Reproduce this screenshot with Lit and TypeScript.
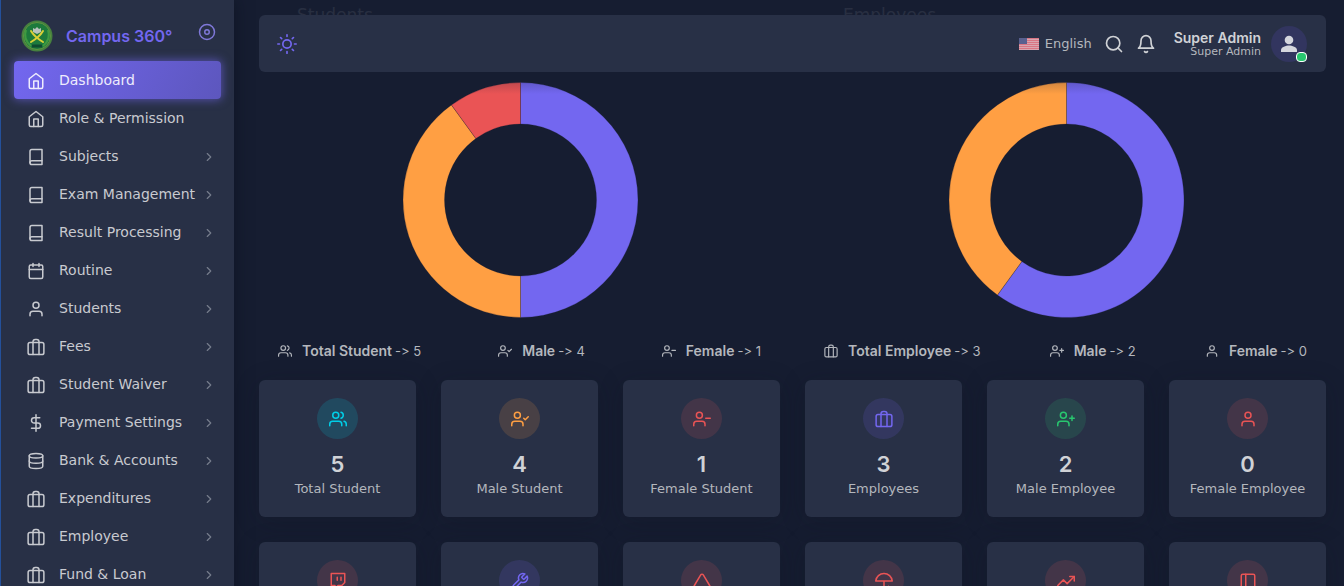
import { LitElement, html, css, svg, nothing } from "lit";
import { customElement, property } from "lit/decorators.js";
import { classMap } from "lit/directives/class-map.js";

const user = svg`<path d="M20 21v-2a4 4 0 0 0-4-4H8a4 4 0 0 0-4 4v2"/><circle cx="12" cy="7" r="4"/>`;
const userLeft = svg`<path d="M16 21v-2a4 4 0 0 0-4-4H5a4 4 0 0 0-4 4v2"/><circle cx="8.5" cy="7" r="4"/>`;

const ICONS: Record<string, unknown> = {
  home: svg`<path d="M3 9l9-7 9 7v11a2 2 0 0 1-2 2H5a2 2 0 0 1-2-2z"/><path d="M9 22V12h6v10"/>`,
  book: svg`<path d="M4 19.5A2.5 2.5 0 0 1 6.500 17H20"/><path d="M6.500 2H20v20H6.500A2.500 2.500 0 0 1 4 19.500v-15A2.500 2.500 0 0 1 6.500 2z"/>`,
  calendar: svg`<rect x="3" y="4" width="18" height="18" rx="2"/><path d="M16 2v4M8 2v4M3 10h18"/>`,
  user,
  users: svg`<path d="M17 21v-2a4 4 0 0 0-4-4H5a4 4 0 0 0-4 4v2"/><circle cx="9" cy="7" r="4"/><path d="M23 21v-2a4 4 0 0 0-3-3.870M16 3.130a4 4 0 0 1 0 7.750"/>`,
  userCheck: svg`${userLeft}<path d="M17 11l2 2 4-4"/>`,
  userMinus: svg`${userLeft}<path d="M23 11h-6"/>`,
  userPlus: svg`${userLeft}<path d="M20 8v6M23 11h-6"/>`,
  luggage: svg`<rect x="1.500" y="6" width="21" height="16" rx="2.500"/><path d="M8 22V5a3 3 0 0 1 3-3h2a3 3 0 0 1 3 3v17"/>`,
  dollar: svg`<path d="M12 1v22M17 5H9.500a3.500 3.500 0 0 0 0 7h5a3.500 3.500 0 0 1 0 7H6"/>`,
  database: svg`<ellipse cx="12" cy="5" rx="9" ry="3"/><path d="M21 12c0 1.660-4 3-9 3s-9-1.340-9-3"/><path d="M3 5v14c0 1.660 4 3 9 3s9-1.340 9-3V5"/>`,
  chevron: svg`<path d="M9 18l6-6-6-6"/>`,
  disc: svg`<circle cx="12" cy="12" r="10"/><circle cx="12" cy="12" r="3"/>`,
  sun: svg`<circle cx="12" cy="12" r="5"/><path d="M12 1v2M12 21v2M4.220 4.220l1.420 1.420M18.360 18.360l1.420 1.420M1 12h2M21 12h2M4.220 19.780l1.420-1.420M18.360 5.640l1.420-1.420"/>`,
  search: svg`<circle cx="11" cy="11" r="8"/><path d="M21 21l-4.350-4.350"/>`,
  bell: svg`<path d="M18 8A6 6 0 0 0 6 8c0 7-3 9-3 9h18s-3-2-3-9"/><path d="M13.730 21a2 2 0 0 1-3.460 0"/>`,
  twitch: svg`<path d="M21 2H3v16h5v4l4-4h5l4-4V2zM11 11V7M16 11V7"/>`,
  wrench: svg`<path d="M14.700 6.300a1 1 0 0 0 0 1.400l1.600 1.600a1 1 0 0 0 1.400 0l3.770-3.770a6 6 0 0 1-7.940 7.940l-6.910 6.910a2.120 2.120 0 0 1-3-3l6.910-6.910a6 6 0 0 1 7.940-7.940l-3.760 3.760z"/>`,
  triangle: svg`<path d="M10.290 3.860L1.820 18a2 2 0 0 0 1.710 3h16.940a2 2 0 0 0 1.710-3L13.710 3.860a2 2 0 0 0-3.420 0z"/>`,
  umbrella: svg`<path d="M23 12a11.050 11.050 0 0 0-22 0zm-5 7a3 3 0 0 1-6 0v-7"/>`,
  trending: svg`<path d="M23 6l-9.500 9.500-5-5L1 18"/><path d="M17 6h6v6"/>`,
  sidebar: svg`<rect x="3" y="3" width="18" height="18" rx="2"/><path d="M9 3v18"/>`,
};

@customElement("ui-icon")
export class UiIcon extends LitElement {
  @property() name = "";
  static styles = css`
    :host { display: inline-flex; flex: none; width: 18px; height: 18px; }
    svg { width: 100%; height: 100%; overflow: visible; fill: none; stroke: currentColor; stroke-width: 2; stroke-linecap: round; stroke-linejoin: round; }
  `;
  render() {
    return html`<svg viewBox="0 0 24 24" aria-hidden="true">${ICONS[this.name]}</svg>`;
  }
}

interface Slice { value: number; color: string; }

@customElement("donut-chart")
export class DonutChart extends LitElement {
  @property({ attribute: false }) slices: Slice[] = [];
  static styles = css`
    :host { display: block; }
    svg { display: block; width: 236px; height: 236px; }
    path { stroke: #161d31; stroke-opacity: 0.5; stroke-width: 0.5; }
  `;
  private sector(from: number, to: number) {
    const outer = 117.5;
    const inner = 76;
    const at = (r: number, t: number) => {
      const a = t * 2 * Math.PI;
      return `${(118.5 + r * Math.sin(a)).toFixed(2)} ${(118 - r * Math.cos(a)).toFixed(2)}`;
    };
    const large = to - from > 0.5 ? 1 : 0;
    return `M${at(outer, from)}A${outer} ${outer} 0 ${large} 1 ${at(outer, to)}L${at(inner, to)}A${inner} ${inner} 0 ${large} 0 ${at(inner, from)}Z`;
  }
  render() {
    const total = this.slices.reduce((sum, s) => sum + s.value, 0);
    let start = 0;
    return html`<svg viewBox="0 0 236 236" role="img">
      ${this.slices.map((s) => {
        const from = start;
        start += s.value / total;
        return svg`<path d=${this.sector(from, start)} fill=${s.color} />`;
      })}
    </svg>`;
  }
}

const PURPLE = "#7367f0";
const ORANGE = "#ff9f43";
const RED = "#ea5455";

const MENU: [string, string, boolean][] = [
  ["home", "Dashboard", false],
  ["home", "Role & Permission", false],
  ["book", "Subjects", true],
  ["book", "Exam Management", true],
  ["book", "Result Processing", true],
  ["calendar", "Routine", true],
  ["user", "Students", true],
  ["luggage", "Fees", true],
  ["luggage", "Student Waiver", true],
  ["dollar", "Payment Settings", true],
  ["database", "Bank & Accounts", true],
  ["luggage", "Expenditures", true],
  ["luggage", "Employee", true],
  ["luggage", "Fund & Loan", true],
];

const CHARTS = [
  {
    title: "Students",
    slices: [{ value: 5, color: PURPLE }, { value: 4, color: ORANGE }, { value: 1, color: RED }],
    legend: [["users", "Total Student", 5], ["userCheck", "Male", 4], ["userMinus", "Female", 1]],
  },
  {
    title: "Employees",
    slices: [{ value: 3, color: PURPLE }, { value: 2, color: ORANGE }],
    legend: [["luggage", "Total Employee", 3], ["userPlus", "Male", 2], ["user", "Female", 0]],
  },
];

const CARDS: { icon: string; tone: string; value?: number; label?: string }[] = [
  { icon: "users", tone: "info", value: 5, label: "Total Student" },
  { icon: "userCheck", tone: "warning", value: 4, label: "Male Student" },
  { icon: "userMinus", tone: "danger", value: 1, label: "Female Student" },
  { icon: "luggage", tone: "primary", value: 3, label: "Employees" },
  { icon: "userPlus", tone: "success", value: 2, label: "Male Employee" },
  { icon: "user", tone: "danger", value: 0, label: "Female Employee" },
  { icon: "twitch", tone: "danger" },
  { icon: "wrench", tone: "primary" },
  { icon: "triangle", tone: "danger" },
  { icon: "umbrella", tone: "danger" },
  { icon: "trending", tone: "danger" },
  { icon: "sidebar", tone: "danger" },
];

@customElement("app-root")
export class AppRoot extends LitElement {
  static styles = css`
    :host {
      display: grid;
      grid-template-columns: 234px minmax(0, 1fr);
      height: 100vh;
      overflow: hidden;
      background: #161d31;
      color: #b4b7bd;
      font: 13px/20px "DejaVu Sans", Verdana, sans-serif;
    }
    * { box-sizing: border-box; }
    a { color: inherit; text-decoration: none; }
    button { display: inline-flex; align-items: center; padding: 0; border: 0; background: none; color: inherit; font: inherit; cursor: pointer; }
    ul { list-style: none; margin: 0; padding: 0; }
    h1, h2, p { margin: 0; font-weight: 400; }

    .sidebar { z-index: 3; overflow: hidden; border-left: 1px solid #24509a; background: #283046; box-shadow: 0 0 15px rgba(10, 15, 28, 0.6); }
    .brand { display: flex; align-items: center; height: 61px; padding: 10px 18px 0 20px; }
    .logo { width: 32px; height: 32px; flex: none; }
    .brand-name { flex: 1; padding-left: 13px; color: #7367f0; font: 600 16px/24px Inter, sans-serif; }
    .pin { color: #7f78d8; align-self: flex-start; padding-top: 13px; }
    .item { display: flex; align-items: center; height: 38px; margin: 0 13px; padding: 2px 5px 0 13px; border-radius: 4px; color: #c8cad0; font-size: 14px; white-space: nowrap; }
    .item span { flex: 1; margin-left: 14px; padding-bottom: 2px; }
    .item.active { background: linear-gradient(118deg, #7367f0, rgba(115, 103, 240, 0.7)); box-shadow: 0 0 10px 1px rgba(115, 103, 240, 0.6); color: #eeecfd; }
    .chevron { width: 14px; height: 14px; color: #767c8b; }

    .main { position: relative; min-width: 0; padding: 4px 18px 0 25px; }
    .veil { position: absolute; inset: 0 0 auto; z-index: 1; height: 94px; background: linear-gradient(180deg, rgba(22, 29, 49, 0.9) 44%, rgba(22, 29, 49, 0.43) 73%, rgba(22, 29, 49, 0)); }
    .navbar { position: absolute; top: 15px; left: 25px; right: 18px; z-index: 2; display: flex; align-items: center; height: 57px; padding: 0 19px 0 18px; border-radius: 6px; background: #283046; }
    .theme { margin-right: auto; color: #7367f0; }
    .theme ui-icon { width: 20px; height: 20px; }
    .language { gap: 6px; margin-right: 12px; }
    .flag { width: 20px; height: 12px; margin-top: 1px; }
    .tool { margin-right: 12px; color: #d0d2d6; }
    .tool ui-icon { width: 20px; height: 20px; }
    .account { gap: 10px; margin-left: 6px; text-align: right; }
    .names { display: grid; }
    .name { color: #d0d2d6; font: 600 14px/15px Inter, sans-serif; }
    .role { font-size: 11px; line-height: 13px; }
    .avatar { position: relative; display: grid; place-items: center; width: 36px; height: 36px; border-radius: 50%; background: #32355f; }
    .avatar svg { width: 18px; height: 18px; fill: #d5d6de; }
    .status { position: absolute; right: 0; bottom: 0; width: 11px; height: 10px; border: 1px solid #fff; border-radius: 4px; background: #28c76f; }

    .charts { display: grid; grid-template-columns: repeat(2, minmax(0, 1fr)); gap: 25px; margin-bottom: 19px; }
    .chart { display: grid; justify-items: center; }
    .chart-title { justify-self: start; height: 78px; padding-left: 38px; color: #d0d2d6; font-size: 17px; line-height: 22px; }
    .legend { display: flex; justify-content: space-between; width: 100%; margin-top: 23px; padding: 0 19px; font-family: Inter, sans-serif; font-variant-ligatures: none; white-space: nowrap; }
    .legend li { display: flex; align-items: center; }
    .legend ui-icon { width: 14px; height: 14px; margin-right: 10px; }
    .legend strong { margin-right: 3px; font-size: 14px; font-weight: 600; }

    .cards { display: grid; grid-template-columns: repeat(6, minmax(0, 1fr)); gap: 25px; }
    .card { display: flex; flex-direction: column; align-items: center; min-height: 137px; padding-top: 18px; border-radius: 6px; background: #283046; box-shadow: 0 4px 24px rgba(15, 20, 34, 0.24); white-space: nowrap; }
    .badge { display: grid; place-items: center; width: 41px; height: 41px; border-radius: 50%; }
    .value { margin-top: 10px; color: #d0d2d6; font: 600 22px/30px Inter, sans-serif; }
    .info { background: rgba(0, 207, 232, 0.16); color: #00cfe8; }
    .warning { background: rgba(255, 159, 67, 0.15); color: #ff9f43; }
    .danger { background: rgba(234, 84, 85, 0.14); color: #ea5455; }
    .primary { background: rgba(115, 103, 240, 0.15); color: #7367f0; }
    .success { background: rgba(40, 199, 111, 0.15); color: #28c76f; }
  `;

  private sidebar() {
    return html`<aside class="sidebar">
      <div class="brand">
        <svg class="logo" viewBox="0 0 32 32" aria-hidden="true">
          <circle cx="16" cy="16" r="15.500" fill="#46803f" />
          <circle cx="16" cy="16" r="13.500" fill="#1d7a3c" stroke="#5f9440" stroke-width="1" />
          <path d="M5 10c-2 6 0 12 5 16M27 10c2 6 0 12-5 16" fill="none" stroke="#3f9a41" stroke-width="2" />
          <path d="M10 11c3 5 7 8 12 11M22 11c-3 5-7 8-12 11" fill="none" stroke="#d9cf36" stroke-width="2" stroke-linecap="round" />
          <path d="M12 8l2 1 2-2 2 2 2-1v4l-4 2-4-2z" fill="#b9c2bd" />
          <path d="M11 26h10" stroke="#0f4a30" stroke-width="3" />
        </svg>
        <a class="brand-name" href="#">Campus 360°</a>
        <button class="pin" aria-label="Collapse menu"><ui-icon name="disc"></ui-icon></button>
      </div>
      <nav><ul>
        ${MENU.map(([icon, label, nested], i) => html`<li>
          <a class=${classMap({ item: true, active: i === 0 })} href="#">
            <ui-icon name=${icon}></ui-icon><span>${label}</span>
            ${nested ? html`<ui-icon class="chevron" name="chevron"></ui-icon>` : nothing}
          </a></li>`)}
      </ul></nav>
    </aside>`;
  }

  private navbar() {
    return html`<header class="navbar">
      <button class="theme" aria-label="Light theme"><ui-icon name="sun"></ui-icon></button>
      <button class="language">
        <svg class="flag" viewBox="0 0 20 12" aria-hidden="true">
          <path fill="#d9a5b0" d="M0 0h20v12H0z" />
          <path stroke="#d87583" d="M0 .5h20M0 2.500h20M0 4.500h20M0 6.500h20M0 8.500h20M0 10.500h20" />
          <path fill="#59608f" d="M0 0h8v6H0z" />
        </svg>English
      </button>
      <button class="tool" aria-label="Search"><ui-icon name="search"></ui-icon></button>
      <button class="tool" aria-label="Notifications"><ui-icon name="bell"></ui-icon></button>
      <button class="account">
        <span class="names"><span class="name">Super Admin</span><span class="role">Super Admin</span></span>
        <span class="avatar">
          <svg viewBox="0 0 18 18" aria-hidden="true"><circle cx="9" cy="5" r="4.300" /><path d="M1 17v-2c0-3 5-4.500 8-4.500s8 1.500 8 4.500v2z" /></svg>
          <span class="status"></span>
        </span>
      </button>
    </header>`;
  }

  render() {
    return html`${this.sidebar()}
      <main class="main">
        <div class="veil"></div>
        ${this.navbar()}
        <section class="charts">
          ${CHARTS.map((c) => html`<article class="chart">
            <h2 class="chart-title">${c.title}</h2>
            <donut-chart .slices=${c.slices}></donut-chart>
            <ul class="legend">
              ${c.legend.map(([icon, label, n]) => html`<li><ui-icon name=${icon}></ui-icon><strong>${label}</strong>-&gt; ${n}</li>`)}
            </ul>
          </article>`)}
        </section>
        <section class="cards">
          ${CARDS.map((c) => html`<article class="card">
            <span class="badge ${c.tone}"><ui-icon name=${c.icon}></ui-icon></span>
            ${c.label ? html`<h2 class="value">${c.value}</h2><p>${c.label}</p>` : nothing}
          </article>`)}
        </section>
      </main>`;
  }
}
